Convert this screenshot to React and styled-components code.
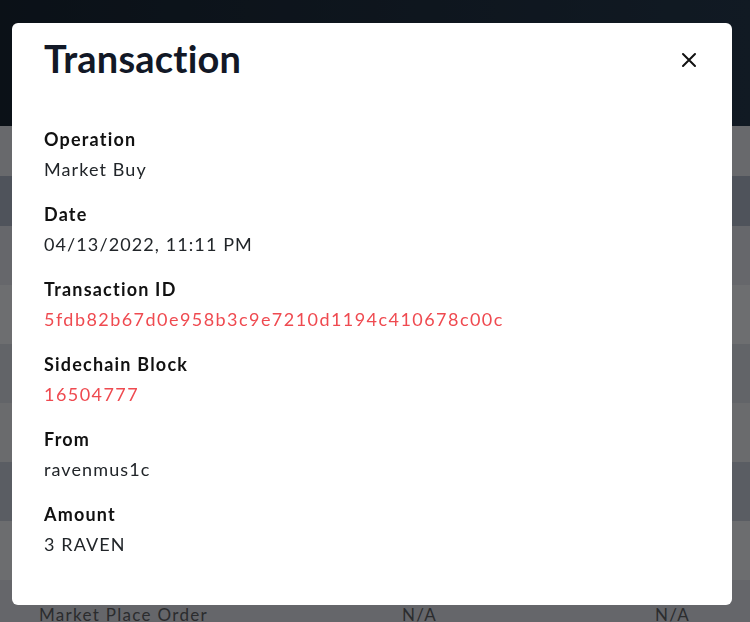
import React from "react";
import styled, { createGlobalStyle } from "styled-components";

const GlobalStyle = createGlobalStyle`
  html, body {
    margin: 0;
    padding: 0;
    height: 100%;
    overflow: hidden;
  }
  body {
    font-family: Lato, "Noto Sans", sans-serif;
    color: #212529;
  }
  * {
    box-sizing: border-box;
  }
`;

const details = [
  { label: "Operation", value: "Market Buy" },
  { label: "Date", value: "04/13/2022, 11:11 PM" },
  {
    label: "Transaction ID",
    value: "5fdb82b67d0e958b3c9e7210d1194c410678c00c",
    link: true,
  },
  { label: "Sidechain Block", value: "16504777", link: true },
  { label: "From", value: "ravenmus1c" },
  { label: "Amount", value: "3 RAVEN" },
];

// background table rows, seen through the backdrop
const rows = [
  { tone: "#d0d2d8", height: 50 },
  { tone: "#9ea6b6", height: 50 },
  { tone: "#cccfd6", height: 59 },
  { tone: "#dadce0", height: 59 },
  { tone: "#c4c8d0", height: 59 },
  { tone: "#d4d6da", height: 59 },
  { tone: "#b4bac6", height: 59 },
  { tone: "#d8dade", height: 59 },
  {
    tone: "#caccd4",
    height: 59,
    cells: ["Market Place Order", "N/A", "N/A"],
  },
];

export default function App() {
  return (
    <>
      <GlobalStyle />
      <Page>
        <TopBar />
        <Table>
          {rows.map((row, i) => (
            <Row key={i} $tone={row.tone} $height={row.height}>
              {row.cells &&
                row.cells.map((cell, j) => <Cell key={j}>{cell}</Cell>)}
            </Row>
          ))}
        </Table>
      </Page>
      <Backdrop />
      <Modal role="dialog">
        <ModalHeader>
          <Title>Transaction</Title>
          <CloseButton aria-label="Close">
            <svg width="16" height="16" viewBox="0 0 16 16">
              <path
                d="M2 2 L14 14 M14 2 L2 14"
                stroke="#111"
                strokeWidth="2"
                strokeLinecap="round"
              />
            </svg>
          </CloseButton>
        </ModalHeader>
        <ModalBody>
          {details.map((item) => (
            <Field key={item.label}>
              <Label>{item.label}</Label>
              <Value $link={item.link}>{item.value}</Value>
            </Field>
          ))}
        </ModalBody>
      </Modal>
    </>
  );
}

const Page = styled.div`
  display: flex;
  flex-direction: column;
  height: 100vh;
`;

const TopBar = styled.header`
  height: 126px;
  flex-shrink: 0;
  background: linear-gradient(90deg, #16222f 0%, #223447 100%);
`;

const Table = styled.div`
  display: flex;
  flex-direction: column;
`;

const Row = styled.div`
  display: grid;
  grid-template-columns: 363px 253px 1fr;
  align-items: center;
  height: ${({ $height }) => $height}px;
  flex-shrink: 0;
  padding: 0 0 0 39px;
  background: ${({ $tone }) => $tone};
`;

const Cell = styled.div`
  font-size: 17px;
  letter-spacing: 1.3px;
  color: #56585c;
  padding-top: 10px;
`;

const Backdrop = styled.div`
  position: fixed;
  inset: 0;
  background: rgba(0, 0, 0, 0.5);
`;

const Modal = styled.div`
  position: fixed;
  top: 23px;
  left: 12px;
  width: 720px;
  height: 582px;
  background: #fff;
  border-radius: 6px;
  display: flex;
  flex-direction: column;
`;

const ModalHeader = styled.div`
  display: flex;
  justify-content: space-between;
  align-items: flex-start;
  padding: 13px 35px 0 32px;
`;

const Title = styled.h2`
  margin: 0;
  font-size: 38px;
  line-height: 1.2;
  font-weight: 700;
  letter-spacing: 0.2px;
  color: #121826;
`;

const CloseButton = styled.button`
  border: none;
  background: none;
  padding: 0;
  margin-top: 16px;
  width: 16px;
  height: 16px;
  display: flex;
  cursor: pointer;
`;

const ModalBody = styled.div`
  padding: 44px 32px 0 32px;
  display: flex;
  flex-direction: column;
`;

const Field = styled.div`
  display: flex;
  flex-direction: column;
  margin-bottom: 18px;
`;

const Label = styled.div`
  font-size: 18px;
  line-height: 27px;
  font-weight: 700;
  letter-spacing: 1.2px;
  color: #111;
  margin-bottom: 3px;
`;

const Value = styled.div`
  font-size: 18px;
  line-height: 27px;
  letter-spacing: ${({ $link }) => ($link ? "1.45px" : "1.1px")};
  color: ${({ $link }) => ($link ? "#ef4a50" : "#212529")};
`;
